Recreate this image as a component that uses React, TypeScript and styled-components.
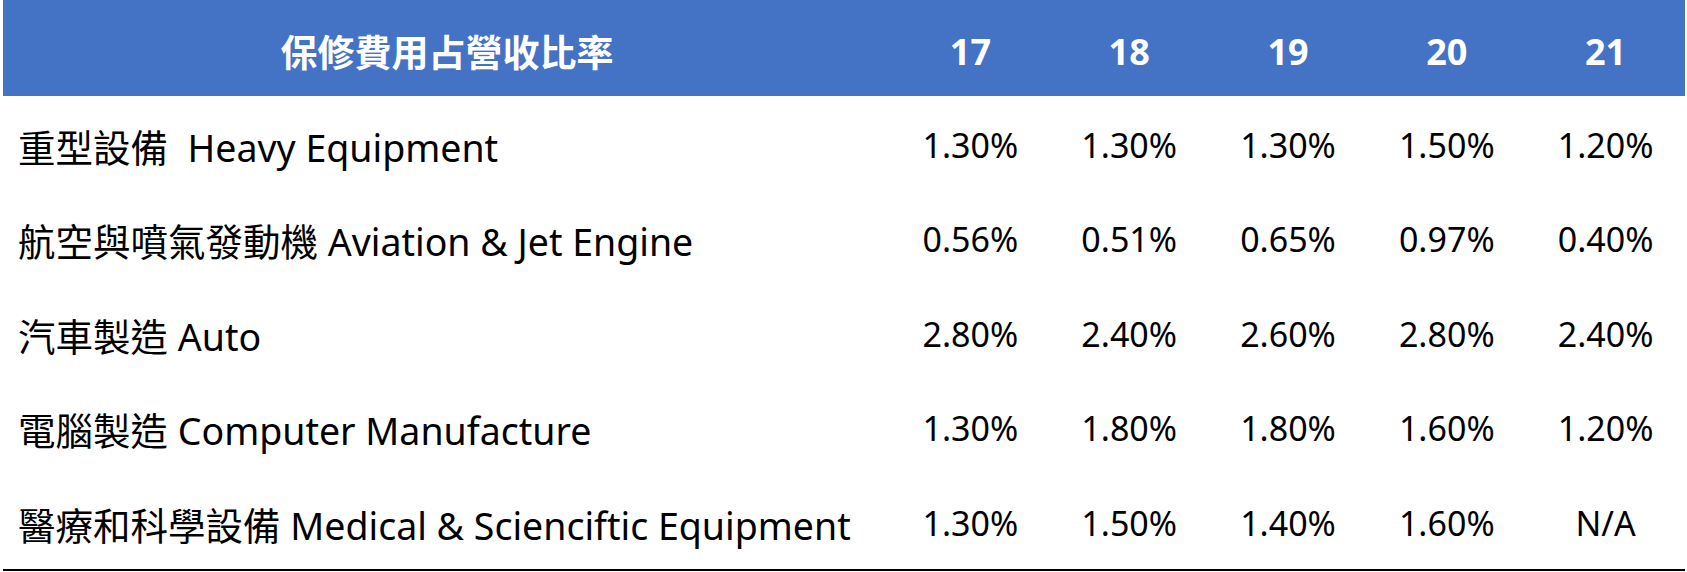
import React from "react";
import styled, { createGlobalStyle } from "styled-components";

const GlobalStyle = createGlobalStyle`
  html, body {
    margin: 0;
    padding: 0;
    background: #fff;
  }
  body {
    font-family: "Noto Sans", "Noto Sans CJK TC", sans-serif;
  }
`;

const Table = styled.div`
  width: 1682px;
  margin-left: 3px;
  display: grid;
  grid-template-columns: 888px repeat(5, 1fr);
  border-bottom: 2px solid #000;
`;

const HeadCell = styled.div<{ $title?: boolean }>`
  height: 96px;
  box-sizing: border-box;
  padding-top: 6px;
  background: #4472c4;
  color: #fff;
  font-weight: 700;
  font-size: ${({ $title }) => ($title ? "37px" : "36px")};
  display: flex;
  align-items: center;
  justify-content: center;
`;

const Cell = styled.div<{ $label?: boolean }>`
  height: 94.5px;
  box-sizing: border-box;
  padding-top: ${({ $label }) => ($label ? "4px" : "3px")};
  display: flex;
  align-items: center;
  justify-content: ${({ $label }) => ($label ? "flex-start" : "center")};
  padding-left: ${({ $label }) => ($label ? "15px" : "0")};
  font-size: ${({ $label }) => ($label ? "37.5px" : "34px")};
  color: #000;
  white-space: pre;
`;

const years = ["17", "18", "19", "20", "21"];

const rows: { label: string; values: string[] }[] = [
  { label: "重型設備  Heavy Equipment", values: ["1.30%", "1.30%", "1.30%", "1.50%", "1.20%"] },
  { label: "航空與噴氣發動機 Aviation & Jet Engine", values: ["0.56%", "0.51%", "0.65%", "0.97%", "0.40%"] },
  { label: "汽車製造 Auto", values: ["2.80%", "2.40%", "2.60%", "2.80%", "2.40%"] },
  { label: "電腦製造 Computer Manufacture", values: ["1.30%", "1.80%", "1.80%", "1.60%", "1.20%"] },
  { label: "醫療和科學設備 Medical & Scienciftic Equipment", values: ["1.30%", "1.50%", "1.40%", "1.60%", "N/A"] },
];

const App = () => {
  return (
    <>
      <GlobalStyle />
      <Table>
        <HeadCell $title>保修費用占營收比率</HeadCell>
        {years.map((y) => (
          <HeadCell key={y}>{y}</HeadCell>
        ))}
        {rows.map((row) => (
          <React.Fragment key={row.label}>
            <Cell $label>{row.label}</Cell>
            {row.values.map((v, i) => (
              <Cell key={i}>{v}</Cell>
            ))}
          </React.Fragment>
        ))}
      </Table>
    </>
  );
};

export default App;
